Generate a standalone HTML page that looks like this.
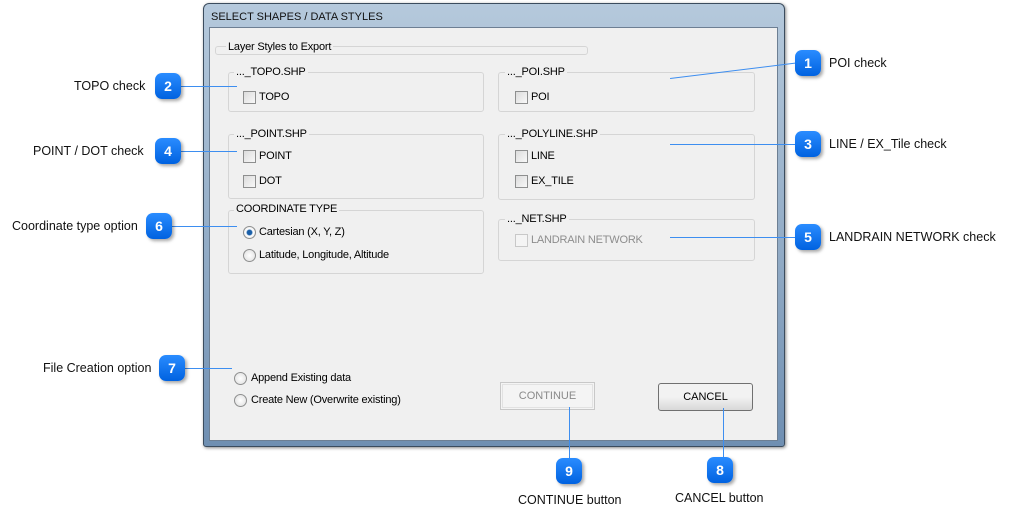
<!DOCTYPE html>
<html><head><style>
body{margin:0;width:1017px;height:524px;background:#fff;position:relative;overflow:hidden;font-family:"Liberation Sans",sans-serif;font-size:11px;color:#000}
.a{position:absolute}
.win{left:203px;top:3px;width:580px;height:442px;background:linear-gradient(#b5c9dc,#8fa9c4 60%,#6f8fb2);border:1px solid #3b4c5e;border-radius:6px 6px 3px 3px;box-shadow:1px 1px 3px #888}
.title{left:211px;top:11px;font-size:11px;color:#111}
.client{left:209px;top:27px;width:567px;height:412px;background:#f0f0f0;border:1px solid #6d7f93;letter-spacing:-0.2px}
.g{border:1px solid #d5d5d5;border-radius:3px}
.gl{background:#f0f0f0;padding:0 2px;font-size:11px;letter-spacing:-0.2px}
.t{letter-spacing:-0.2px}
.cb{width:11px;height:11px;border:1px solid #8e8f8f;background:linear-gradient(135deg,#dcdcdc,#f8f8f8)}
.rb{width:11px;height:11px;border:1px solid #8e8f8f;border-radius:50%;background:radial-gradient(#fff,#ddd)}
.m{width:26px;height:26px;border-radius:7px;background:linear-gradient(#2a8cff,#0062e0);color:#fff;font-weight:bold;font-size:14px;text-align:center;line-height:26px;box-shadow:2px 2px 3px rgba(0,0,0,.35)}
.lbl{font-size:12.5px;color:#111}
.ln{background:#3d8ef0}
</style></head><body>
<div class="a win"></div>
<div class="a title">SELECT SHAPES / DATA STYLES</div>
<div class="a client"></div>

<div class="a g" style="left:215px;top:46px;width:371px;height:7px"></div>
<div class="a gl" style="left:226px;top:41px">Layer Styles to Export</div>

<div class="a g" style="left:228px;top:72px;width:254px;height:38px"></div>
<div class="a gl" style="left:234px;top:66px">..._TOPO.SHP</div>
<div class="a cb" style="left:243px;top:91px"></div><div class="a t" style="left:259px;top:91px">TOPO</div>

<div class="a g" style="left:498px;top:72px;width:255px;height:38px"></div>
<div class="a gl" style="left:505px;top:66px">..._POI.SHP</div>
<div class="a cb" style="left:515px;top:91px"></div><div class="a t" style="left:531px;top:91px">POI</div>

<div class="a g" style="left:228px;top:134px;width:254px;height:63px"></div>
<div class="a gl" style="left:234px;top:128px">..._POINT.SHP</div>
<div class="a cb" style="left:243px;top:150px"></div><div class="a t" style="left:259px;top:150px">POINT</div>
<div class="a cb" style="left:243px;top:175px"></div><div class="a t" style="left:259px;top:175px">DOT</div>

<div class="a g" style="left:498px;top:134px;width:255px;height:64px"></div>
<div class="a gl" style="left:505px;top:128px">..._POLYLINE.SHP</div>
<div class="a cb" style="left:515px;top:150px"></div><div class="a t" style="left:531px;top:150px">LINE</div>
<div class="a cb" style="left:515px;top:175px"></div><div class="a t" style="left:531px;top:175px">EX_TILE</div>

<div class="a g" style="left:228px;top:210px;width:254px;height:62px"></div>
<div class="a gl" style="left:234px;top:203px">COORDINATE TYPE</div>
<div class="a rb" style="left:243px;top:226px;background:radial-gradient(#1a5fa8 30%,#fff 45%,#ddd)"></div><div class="a t" style="left:259px;top:226px">Cartesian (X, Y, Z)</div>
<div class="a rb" style="left:243px;top:249px"></div><div class="a t" style="left:259px;top:249px">Latitude, Longitude, Altitude</div>

<div class="a g" style="left:498px;top:219px;width:255px;height:40px"></div>
<div class="a gl" style="left:505px;top:213px">..._NET.SHP</div>
<div class="a cb" style="left:515px;top:234px;border-color:#c8c8c8;background:#f4f4f4"></div><div class="a t" style="left:531px;top:234px;color:#8d8d8d">LANDRAIN NETWORK</div>

<div class="a rb" style="left:234px;top:372px"></div><div class="a t" style="left:251px;top:372px">Append Existing data</div>
<div class="a rb" style="left:234px;top:394px"></div><div class="a t" style="left:251px;top:394px">Create New (Overwrite existing)</div>

<div class="a" style="left:500px;top:382px;width:93px;height:26px;border:1px solid #c8c8c8;outline:1px solid #e2e2e2;outline-offset:-3px;background:#f4f4f4;color:#8a8a8a;text-align:center;line-height:26px">CONTINUE</div>
<div class="a" style="left:658px;top:383px;width:93px;height:26px;border:1px solid #707070;border-radius:3px;background:linear-gradient(#f2f2f2 50%,#d8d8d8);text-align:center;line-height:26px">CANCEL</div>

<div class="a ln" style="left:670px;top:78px;width:127px;height:1px;transform-origin:0 0;transform:rotate(-7deg)"></div>
<div class="a ln" style="left:181px;top:86px;width:56px;height:1px"></div>
<div class="a ln" style="left:670px;top:144px;width:125px;height:1px"></div>
<div class="a ln" style="left:181px;top:151px;width:56px;height:1px"></div>
<div class="a ln" style="left:670px;top:237px;width:125px;height:1px"></div>
<div class="a ln" style="left:172px;top:226px;width:65px;height:1px"></div>
<div class="a ln" style="left:185px;top:368px;width:47px;height:1px"></div>
<div class="a ln" style="left:569px;top:407px;width:1px;height:52px"></div>
<div class="a ln" style="left:723px;top:408px;width:1px;height:50px"></div>

<div class="a m" style="left:795px;top:50px">1</div><div class="a lbl" style="left:829px;top:56px">POI check</div>
<div class="a m" style="left:155px;top:73px">2</div><div class="a lbl" style="left:74px;top:79px">TOPO check</div>
<div class="a m" style="left:795px;top:131px">3</div><div class="a lbl" style="left:829px;top:137px">LINE / EX_Tile check</div>
<div class="a m" style="left:155px;top:138px">4</div><div class="a lbl" style="left:33px;top:144px">POINT / DOT check</div>
<div class="a m" style="left:795px;top:224px">5</div><div class="a lbl" style="left:829px;top:230px">LANDRAIN NETWORK check</div>
<div class="a m" style="left:146px;top:213px">6</div><div class="a lbl" style="left:12px;top:219px">Coordinate type option</div>
<div class="a m" style="left:159px;top:355px">7</div><div class="a lbl" style="left:43px;top:361px">File Creation option</div>
<div class="a m" style="left:707px;top:457px">8</div><div class="a lbl" style="left:675px;top:491px">CANCEL button</div>
<div class="a m" style="left:556px;top:458px">9</div><div class="a lbl" style="left:518px;top:493px">CONTINUE button</div>
</body></html>
